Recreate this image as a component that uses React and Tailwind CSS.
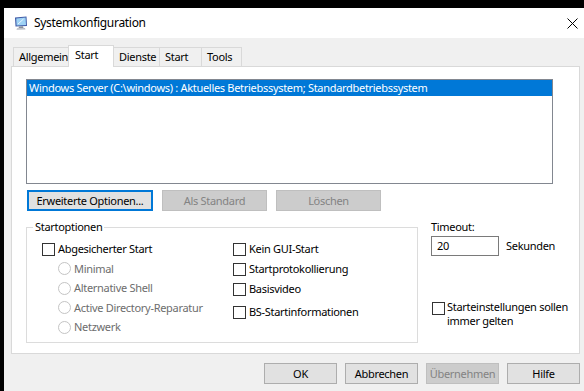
import React from 'react';

const font = { fontFamily: '"Noto Sans", "Liberation Sans", sans-serif' };

function Checkbox({ label, className = '' }) {
  return (
    <div className={`flex items-center ${className}`}>
      <span className="w-[13px] h-[13px] border border-[#333333] bg-white shrink-0" />
      <span className="ml-[3px] text-[11px] leading-[16px] text-black whitespace-nowrap">{label}</span>
    </div>
  );
}

function Radio({ label }) {
  return (
    <div className="flex items-center h-[19.5px]">
      <span className="w-[13px] h-[13px] rounded-full border border-[#c4c4c4] bg-white shrink-0" />
      <span className="ml-[3px] text-[11px] leading-[16px] text-[#6d6d6d] whitespace-nowrap">{label}</span>
    </div>
  );
}

function Button({ children, disabled, focused, className = '' }) {
  let cls = 'border border-[#adadad] bg-[#e1e1e1] text-black';
  if (disabled) cls = 'border border-[#bfbfbf] bg-[#cccccc] text-[#838383]';
  if (focused) cls = 'border-2 border-[#0078d7] bg-[#e1e1e1] text-black';
  return (
    <div className={`h-[21px] shrink-0 flex items-center justify-center whitespace-nowrap text-[11px] leading-[16px] ${cls} ${className}`}>
      {children}
    </div>
  );
}

function Tab({ label, selected, className = '' }) {
  if (selected) {
    return (
      <div className={`relative z-10 -mb-px h-[22px] bg-white border border-b-0 border-[#d9d9d9] pl-[6px] pt-[1px] text-[11px] leading-[16px] whitespace-nowrap ${className}`}>
        {label}
      </div>
    );
  }
  return (
    <div className={`h-[19px] bg-[#f0f0f0] border border-b-0 border-[#d9d9d9] pl-[5px] pt-[1px] text-[11px] leading-[16px] whitespace-nowrap ${className}`}>
      {label}
    </div>
  );
}

function MonitorIcon() {
  return (
    <svg width="14" height="14" viewBox="0 0 14 14">
      <path d="M1 1.5 L12.5 0.5 L13 10 L1.5 10.5 Z" fill="#3f5aa6" />
      <path d="M2.2 2.4 L11.6 1.6 L12 9 L2.6 9.4 Z" fill="#9ed2f5" />
      <path d="M4 8 L9.5 3" stroke="#e8f6ff" strokeWidth="1" />
      <path d="M5 10.5 L9 10.3 L9.5 12 L4.5 12.2 Z" fill="#8a8f9a" />
      <path d="M3 12.3 L11 12 L11.5 13.5 L2.5 13.7 Z" fill="#b5b9c2" />
    </svg>
  );
}

export default function App() {
  return (
    <div className="w-[584px] h-[391px] bg-black pt-[8px] pl-[4px] overflow-hidden tracking-[-0.3px]" style={font}>
      <div className="h-full flex flex-col bg-[#f0f0f0]">
        {/* Titelleiste */}
        <div className="h-[30px] shrink-0 bg-white flex items-center pl-[10px] pr-[6px]">
          <MonitorIcon />
          <span className="ml-[6px] text-[12px] leading-[16px] text-black">Systemkonfiguration</span>
          <svg className="ml-auto" width="11" height="11" viewBox="0 0 11 11">
            <path d="M0.5 0.5 L10.5 10.5 M10.5 0.5 L0.5 10.5" stroke="#000" strokeWidth="1" />
          </svg>
        </div>

        <div className="flex-1 flex flex-col pl-[7px] pr-[4px]">
          {/* Reiter */}
          <div className="h-[28px] flex items-end pl-[2px]">
            <Tab label="Allgemein" className="w-[56px]" />
            <Tab label="Start" selected className="w-[46px] -ml-px" />
            <Tab label="Dienste" className="w-[47px] -ml-px" />
            <Tab label="Start" className="w-[43px] -ml-px" />
            <Tab label="Tools" className="w-[41px] -ml-px" />
          </div>

          {/* Reiterinhalt */}
          <div className="h-[288px] bg-white border border-[#d9d9d9] pl-[14px] pt-[12px]">
            <div className="w-[527px] h-[105px] border border-[#828790] bg-white">
              <div className="h-[16px] bg-[#0078d7] text-white text-[11px] leading-[16px] pl-[2px] whitespace-nowrap">
                Windows Server (C:\windows) : Aktuelles Betriebssystem; Standardbetriebssystem
              </div>
            </div>

            <div className="flex mt-[6px] ml-px gap-[9px]">
              <Button focused className="w-[126px]">Erweiterte Optionen...</Button>
              <Button disabled className="w-[105px]">Als Standard</Button>
              <Button disabled className="w-[105px]">Löschen</Button>
            </div>

            <div className="flex mt-[8px]">
              <fieldset className="w-[392px] h-[124px] shrink-0 border border-[#dcdcdc] px-0 m-0">
                <legend className="ml-[6px] px-[2px] text-[11px] leading-[16px] text-black">Startoptionen</legend>
                <div className="flex pt-[4px] pl-[15px]">
                  <div className="w-[191px] shrink-0">
                    <Checkbox label="Abgesicherter Start" className="h-[20px]" />
                    <div className="pl-[16px]">
                      <Radio label="Minimal" />
                      <Radio label="Alternative Shell" />
                      <Radio label="Active Directory-Reparatur" />
                      <Radio label="Netzwerk" />
                    </div>
                  </div>
                  <div>
                    <Checkbox label="Kein GUI-Start" className="h-[20px]" />
                    <Checkbox label="Startprotokollierung" className="h-[20px]" />
                    <Checkbox label="Basisvideo" className="h-[20px]" />
                    <Checkbox label="BS-Startinformationen" className="h-[20px] mt-[3px]" />
                  </div>
                </div>
              </fieldset>

              <div className="ml-[13px] flex flex-col shrink-0">
                <span className="text-[11px] leading-[16px] text-black">Timeout:</span>
                <div className="flex items-center mt-[1px]">
                  <div className="w-[68px] h-[20px] border border-[#7a7a7a] bg-white pl-[5px] text-[11px] leading-[18px]">20</div>
                  <span className="ml-[7px] text-[11px] leading-[16px]">Sekunden</span>
                </div>
                <div className="flex items-start mt-[44px]">
                  <span className="w-[13px] h-[13px] border border-[#333333] bg-white shrink-0 mt-[2px] ml-px" />
                  <span className="ml-[2px] text-[11px] leading-[14px] text-black whitespace-nowrap">
                    Starteinstellungen sollen<br />immer gelten
                  </span>
                </div>
              </div>
            </div>
          </div>

          {/* Schaltflächen */}
          <div className="flex justify-end gap-[8px] mt-[9px]">
            <Button className="w-[73px]">OK</Button>
            <Button className="w-[73px]">Abbrechen</Button>
            <Button disabled className="w-[73px]">Übernehmen</Button>
            <Button className="w-[73px]">Hilfe</Button>
          </div>
        </div>
      </div>
    </div>
  );
}
